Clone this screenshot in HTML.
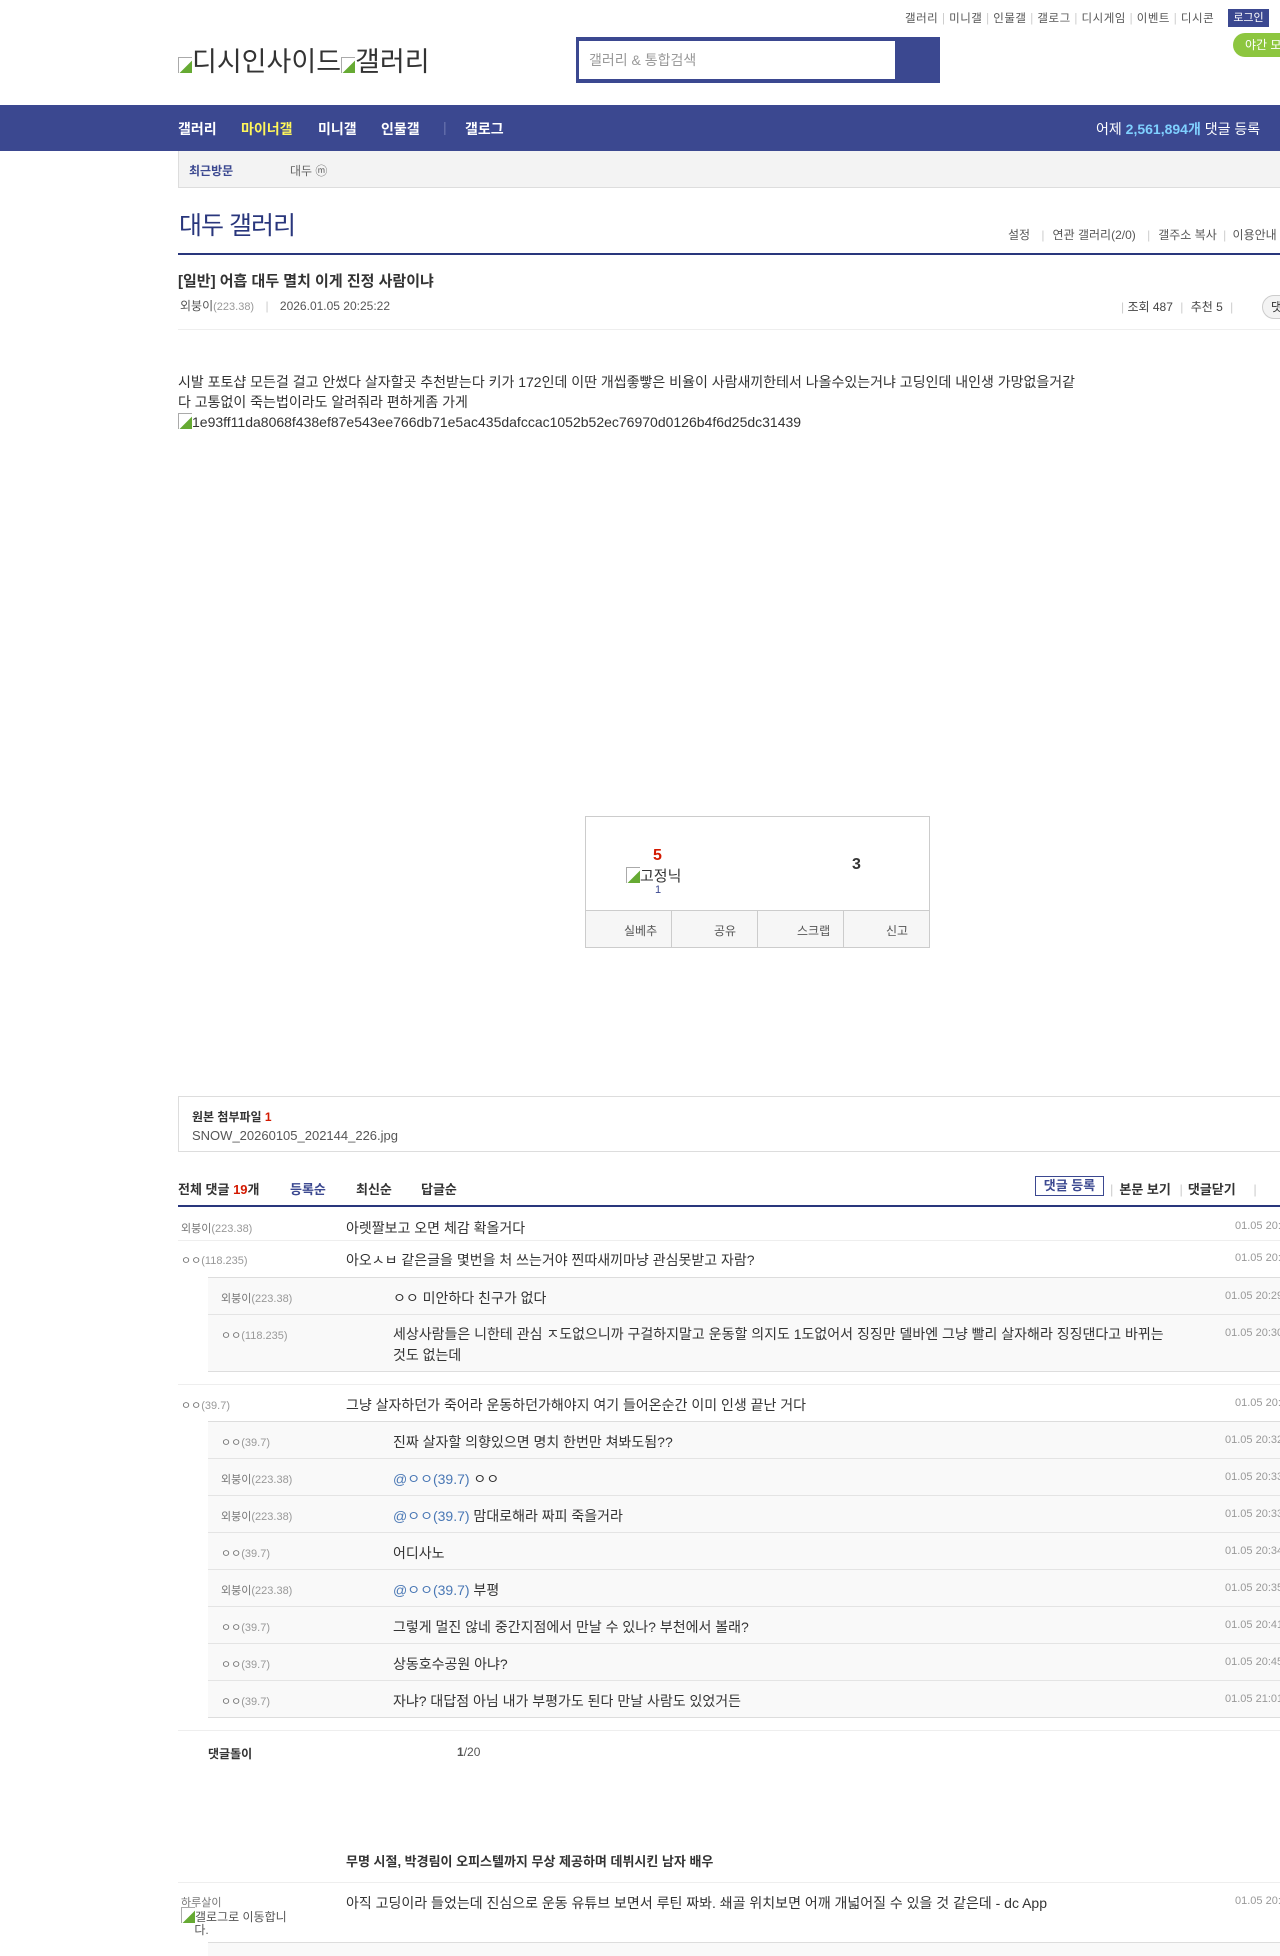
<!DOCTYPE html>
<html><head><meta charset="utf-8">
<style>
*{margin:0;padding:0;box-sizing:border-box}
html,body{width:1280px;height:1956px;overflow:hidden;background:#fff}
body{font-family:"Liberation Sans","Noto Sans CJK KR",sans-serif;color:#333;font-size:13px;position:relative}
.a{position:absolute;white-space:nowrap}
.nav{position:absolute;left:0;top:105px;width:1280px;height:46px;background:#3b4890}
.nav span{position:absolute;top:14px;font-size:14px;font-weight:bold;color:#fff;white-space:nowrap}
.g{color:#999;font-size:11px}
.row{position:absolute;left:178px;width:1130px;border-bottom:1px solid #eee}
.box{position:absolute;left:208px;width:1100px;background:#f9f9f9;border-top:1px solid #ddd;border-bottom:1px solid #ddd}
.rr{position:absolute;left:0;width:1100px;border-bottom:1px solid #e4e4e4}
.nm{position:absolute;font-size:11px;color:#777;white-space:nowrap}
.nm i{font-style:normal;color:#999}
.tx{position:absolute;font-size:14px;color:#333;white-space:nowrap}
.dt{position:absolute;font-size:11px;color:#999;white-space:nowrap}
.at{color:#4a78b5}
.bi{display:inline-block;width:14px;height:16px;border-left:1px solid #aaa;border-top:1px solid #aaa;background:linear-gradient(135deg,#fff 55%,#6a3 56%);vertical-align:-2px}
</style></head><body>
<div class="a" style="left:905px;top:10px;font-size:11.5px;color:#555;letter-spacing:.5px">갤러리 <span style="color:#ccc">|</span> 미니갤 <span style="color:#ccc">|</span> 인물갤 <span style="color:#ccc">|</span> 갤로그 <span style="color:#ccc">|</span> 디시게임 <span style="color:#ccc">|</span> 이벤트 <span style="color:#ccc">|</span> 디시콘</div>
<div class="a" style="left:1228px;top:9px;width:41px;height:18px;background:#3b4890;color:#fff;font-size:11px;text-align:center;line-height:18px">로그인</div>
<div class="a" style="left:1233px;top:33px;width:70px;height:24px;background:#8dc63f;border-radius:12px;color:#fff;font-size:12px;line-height:24px;padding-left:12px">야간 모드</div>
<div class="a" style="left:178px;top:40px;font-size:27px;color:#333"><span class="bi"></span>디시인사이드<span class="bi"></span>갤러리</div>
<div class="a" style="left:576px;top:37px;width:364px;height:46px;background:#3b4890"></div>
<div class="a" style="left:579px;top:41px;width:316px;height:38px;background:#fff;color:#999;font-size:14px;line-height:38px;padding-left:10px">갤러리 &amp; 통합검색</div>
<div class="nav"><span style="left:178px">갤러리</span><span style="left:241px;color:#fff65a">마이너갤</span><span style="left:318px">미니갤</span><span style="left:381px">인물갤</span><span style="left:443px;color:#6b76b0;font-weight:normal">|</span><span style="left:465px">갤로그</span><span style="left:1096px;font-weight:normal">어제 <b style="color:#7fd0ff">2,561,894개</b> 댓글 등록</span></div>
<div class="a" style="left:178px;top:151px;width:1130px;height:37px;background:#f3f3f3;border-bottom:1px solid #ddd;border-left:1px solid #ddd"></div>
<div class="a" style="left:189px;top:162px;font-size:12px;font-weight:bold;color:#3b4890">최근방문</div>
<div class="a" style="left:290px;top:162px;font-size:12px;color:#666">대두 ⓜ</div>
<div class="a" style="left:179px;top:206px;font-size:25px;color:#29367c;letter-spacing:-1px">대두 갤러리</div>
<div class="a" style="left:1008px;top:226px;font-size:12px;color:#555">설정 <span style="color:#ccc;margin:0 8px">|</span>연관 갤러리(2/0) <span style="color:#ccc;margin:0 8px">|</span>갤주소 복사 <span style="color:#ccc;margin:0 3px">|</span> 이용안내</div>
<div class="a" style="left:178px;top:253px;width:1130px;height:2px;background:#29367c"></div>
<div class="a" style="left:178px;top:270px;font-size:15px;font-weight:bold;color:#333">[일반] 어흡 대두 멸치 이게 진정 사람이냐</div>
<div class="a" style="left:180px;top:297px;font-size:12px;color:#555">외붕이<span class="g">(223.38)</span> <span style="color:#ccc;margin:0 8px">|</span> 2026.01.05 20:25:22</div>
<div class="a" style="left:1121px;top:298px;font-size:12px;color:#444"><span style="color:#ccc">|</span> 조회 487 <span style="color:#ccc;margin:0 4px">|</span> 추천 5 <span style="color:#ccc;margin:0 4px">|</span></div>
<div class="a" style="left:1262px;top:295px;width:40px;height:24px;border:1px solid #ccc;border-radius:12px;background:#f3f3f3;font-size:12px;padding-left:8px;line-height:22px">댓글</div>
<div class="a" style="left:178px;top:329px;width:1130px;height:1px;background:#eee"></div>
<div class="a" style="left:178px;top:372px;font-size:14px;line-height:20px;color:#333">시발 포토샵 모든걸 걸고 안썼다 살자할곳 추천받는다 키가 172인데 이딴 개씹좋빻은 비율이 사람새끼한테서 나올수있는거냐 고딩인데 내인생 가망없을거같<br>다 고통없이 죽는법이라도 알려줘라 편하게좀 가게<br><span class="bi"></span>1e93ff11da8068f438ef87e543ee766db71e5ac435dafccac1052b52ec76970d0126b4f6d25dc31439</div>
<div class="a" style="left:585px;top:816px;width:345px;height:132px;border:1px solid #ccc"></div>
<div class="a" style="left:586px;top:910px;width:343px;height:37px;background:#f6f6f6;border-top:1px solid #ccc"></div>
<div class="a" style="left:671px;top:910px;width:1px;height:37px;background:#ccc"></div>
<div class="a" style="left:757px;top:910px;width:1px;height:37px;background:#ccc"></div>
<div class="a" style="left:843px;top:910px;width:1px;height:37px;background:#ccc"></div>
<div class="a" style="left:624px;top:922px;font-size:12px;color:#555">실베추</div>
<div class="a" style="left:714px;top:922px;font-size:12px;color:#555">공유</div>
<div class="a" style="left:797px;top:922px;font-size:12px;color:#555">스크랩</div>
<div class="a" style="left:886px;top:922px;font-size:12px;color:#555">신고</div>
<div class="a" style="left:653px;top:847px;font-size:16px;font-weight:bold;color:#d31900">5</div>
<div class="a" style="left:626px;top:865px;font-size:15px;color:#333"><span class="bi"></span>고정닉</div>
<div class="a" style="left:655px;top:884px;font-size:11px;color:#3b4890">1</div>
<div class="a" style="left:852px;top:856px;font-size:16px;font-weight:bold;color:#333">3</div>
<div class="a" style="left:178px;top:1096px;width:1130px;height:56px;border:1px solid #ddd"></div>
<div class="a" style="left:192px;top:1108px;font-size:12px;font-weight:bold;color:#333">원본 첨부파일 <span style="color:#d31900">1</span></div>
<div class="a" style="left:192px;top:1128px;font-size:13px;color:#555">SNOW_20260105_202144_226.jpg</div>
<div class="a" style="left:178px;top:1179px;font-size:13px;font-weight:bold;color:#333">전체 댓글 <span style="color:#d31900">19</span>개</div>
<div class="a" style="left:290px;top:1179px;font-size:13px;font-weight:bold;color:#3b4890">등록순</div>
<div class="a" style="left:356px;top:1179px;font-size:13px;font-weight:bold;color:#333">최신순</div>
<div class="a" style="left:421px;top:1179px;font-size:13px;font-weight:bold;color:#333">답글순</div>
<div class="a" style="left:1035px;top:1176px;width:69px;height:20px;border:1px solid #3b4890;font-size:13px;font-weight:bold;color:#3b4890;text-align:center;line-height:18px">댓글 등록</div>
<div class="a" style="left:1110px;top:1179px;font-size:13px;font-weight:bold;color:#333"><span style="color:#ccc;font-weight:normal;margin-right:6px">|</span>본문 보기 <span style="color:#ccc;font-weight:normal;margin:0 5px">|</span>댓글닫기 <span style="color:#ccc;font-weight:normal;margin-left:14px">|</span></div>
<div class="a" style="left:178px;top:1205px;width:1130px;height:2px;background:#29367c"></div>

<div class="row" style="top:1207px;height:34px"></div>
<div class="nm" style="left:181px;top:1220px">외붕이<i>(223.38)</i></div>
<div class="tx" style="left:346px;top:1218px">아렛짤보고 오면 체감 확올거다</div>
<div class="dt" style="left:1235px;top:1220px">01.05 20:26:11</div>
<div class="nm" style="left:181px;top:1252px">ㅇㅇ<i>(118.235)</i></div>
<div class="tx" style="left:346px;top:1250px">아오ㅅㅂ 같은글을 몇번을 처 쓰는거야 찐따새끼마냥 관심못받고 자람?</div>
<div class="dt" style="left:1235px;top:1252px">01.05 20:28:12</div>
<div class="box" style="top:1277px;height:95px">
 <div class="rr" style="top:0;height:37px"></div>
</div>
<div class="nm" style="left:221px;top:1290px">외붕이<i>(223.38)</i></div>
<div class="tx" style="left:393px;top:1288px">ㅇㅇ 미안하다 친구가 없다</div>
<div class="dt" style="left:1225px;top:1290px">01.05 20:29:01</div>
<div class="nm" style="left:221px;top:1327px">ㅇㅇ<i>(118.235)</i></div>
<div class="tx" style="left:393px;top:1324px;line-height:21px">세상사람들은 니한테 관심 ㅈ도없으니까 구걸하지말고 운동할 의지도 1도없어서 징징만 델바엔 그냥 빨리 살자해라 징징댄다고 바뀌는<br>것도 없는데</div>
<div class="dt" style="left:1225px;top:1327px">01.05 20:30:11</div>
<div class="row" style="top:1384px;height:1px;border:0;background:#eee"></div>
<div class="nm" style="left:181px;top:1397px">ㅇㅇ<i>(39.7)</i></div>
<div class="tx" style="left:346px;top:1395px">그냥 살자하던가 죽어라 운동하던가해야지 여기 들어온순간 이미 인생 끝난 거다</div>
<div class="dt" style="left:1235px;top:1397px">01.05 20:31:12</div>
<div class="box" style="top:1421px;height:297px">
 <div class="rr" style="top:0;height:37px"></div>
 <div class="rr" style="top:37px;height:37px"></div>
 <div class="rr" style="top:74px;height:37px"></div>
 <div class="rr" style="top:111px;height:37px"></div>
 <div class="rr" style="top:148px;height:37px"></div>
 <div class="rr" style="top:185px;height:37px"></div>
 <div class="rr" style="top:222px;height:37px"></div>
</div>
<div class="nm" style="left:221px;top:1434px">ㅇㅇ<i>(39.7)</i></div>
<div class="tx" style="left:393px;top:1432px">진짜 살자할 의향있으면 명치 한번만 쳐봐도됨??</div>
<div class="dt" style="left:1225px;top:1434px">01.05 20:32:01</div>
<div class="nm" style="left:221px;top:1471px">외붕이<i>(223.38)</i></div>
<div class="tx" style="left:393px;top:1469px"><span class="at">@ㅇㅇ(39.7)</span> ㅇㅇ</div>
<div class="dt" style="left:1225px;top:1471px">01.05 20:33:01</div>
<div class="nm" style="left:221px;top:1508px">외붕이<i>(223.38)</i></div>
<div class="tx" style="left:393px;top:1506px"><span class="at">@ㅇㅇ(39.7)</span> 맘대로해라 짜피 죽을거라</div>
<div class="dt" style="left:1225px;top:1508px">01.05 20:33:21</div>
<div class="nm" style="left:221px;top:1545px">ㅇㅇ<i>(39.7)</i></div>
<div class="tx" style="left:393px;top:1543px">어디사노</div>
<div class="dt" style="left:1225px;top:1545px">01.05 20:34:01</div>
<div class="nm" style="left:221px;top:1582px">외붕이<i>(223.38)</i></div>
<div class="tx" style="left:393px;top:1580px"><span class="at">@ㅇㅇ(39.7)</span> 부평</div>
<div class="dt" style="left:1225px;top:1582px">01.05 20:35:01</div>
<div class="nm" style="left:221px;top:1619px">ㅇㅇ<i>(39.7)</i></div>
<div class="tx" style="left:393px;top:1617px">그렇게 멀진 않네 중간지점에서 만날 수 있나? 부천에서 볼래?</div>
<div class="dt" style="left:1225px;top:1619px">01.05 20:41:01</div>
<div class="nm" style="left:221px;top:1656px">ㅇㅇ<i>(39.7)</i></div>
<div class="tx" style="left:393px;top:1654px">상동호수공원 아냐?</div>
<div class="dt" style="left:1225px;top:1656px">01.05 20:45:01</div>
<div class="nm" style="left:221px;top:1693px">ㅇㅇ<i>(39.7)</i></div>
<div class="tx" style="left:393px;top:1691px">자냐? 대답점 아님 내가 부평가도 된다 만날 사람도 있었거든</div>
<div class="dt" style="left:1225px;top:1693px">01.05 21:01:01</div>
<div class="row" style="top:1730px;height:1px;border:0;background:#eee"></div>
<div class="a" style="left:208px;top:1745px;font-size:12px;font-weight:bold;color:#333">댓글돌이</div>
<div class="a" style="left:457px;top:1745px;font-size:12px;color:#555"><b>1</b>/20</div>
<div class="a" style="left:346px;top:1851px;font-size:13px;font-weight:bold;color:#333">무명 시절, 박경림이 오피스텔까지 무상 제공하며 데뷔시킨 남자 배우</div>
<div class="row" style="top:1882px;height:1px;border:0;background:#eee"></div>
<div class="nm" style="left:181px;top:1894px">하루살이</div>
<div class="a" style="left:181px;top:1907px;font-size:12px;color:#555;line-height:13px"><span class="bi"></span>갤로그로 이동합니<br>&nbsp;&nbsp;&nbsp;&nbsp;다.</div>
<div class="tx" style="left:346px;top:1893px">아직 고딩이라 들었는데 진심으로 운동 유튜브 보면서 루틴 짜봐. 쇄골 위치보면 어깨 개넓어질 수 있을 것 같은데 - dc App</div>
<div class="dt" style="left:1235px;top:1895px">01.05 20:55:11</div>
<div class="box" style="top:1942px;height:40px"></div>
</body></html>
